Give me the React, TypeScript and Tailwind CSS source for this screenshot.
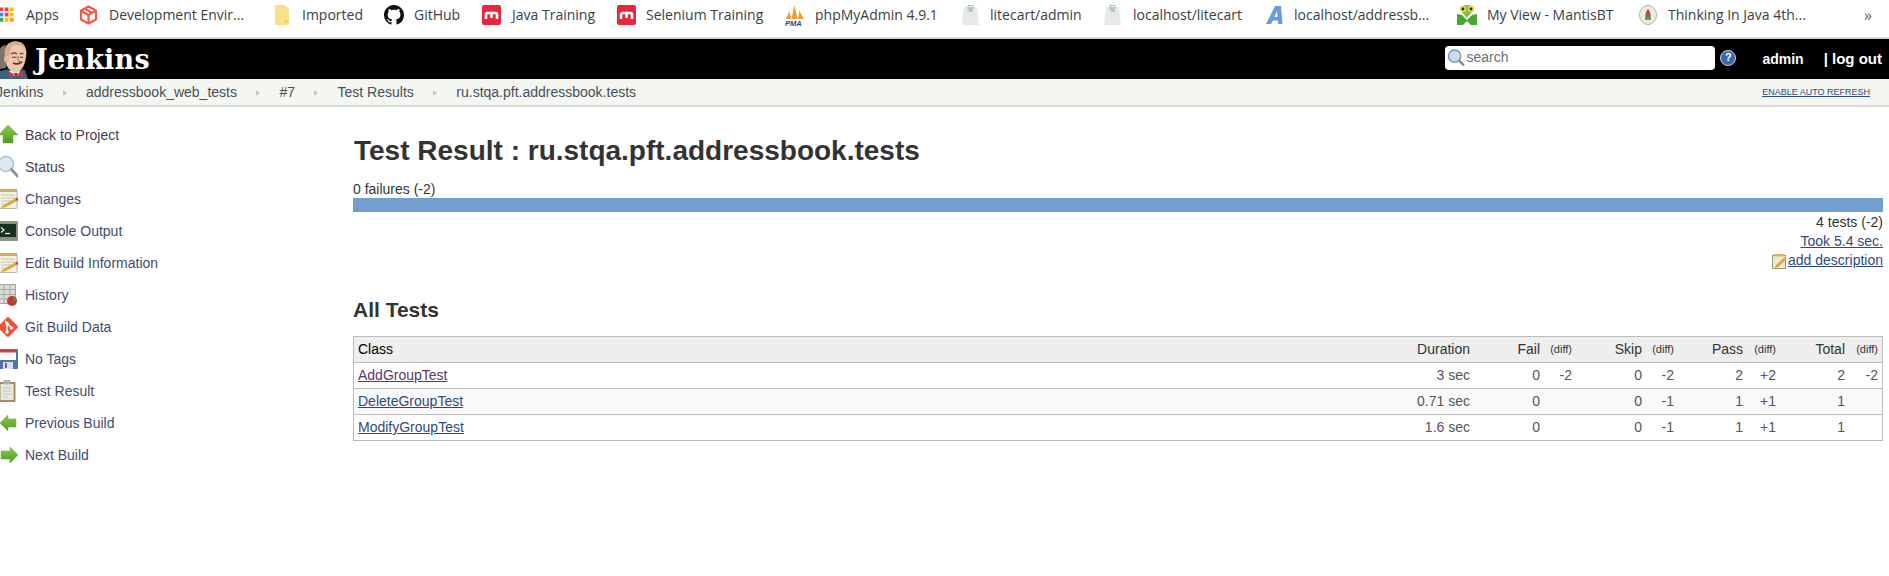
const sans = "font-['Liberation_Sans',Arial,sans-serif]";

function AppsIcon() {
  const colors = ['#ea4335', '#ea4335', '#fbbc04', '#4285f4', '#ea4335', '#fbbc04', '#34a853', '#fbbc04', '#fa9b17'];
  return (
    <svg width="14" height="15" viewBox="0 0 14 15">
      {colors.map((c, i) => (
        <rect key={i} x={(i % 3) * 5.2 - 0.5} y={Math.floor(i / 3) * 5.2 + 0.5} width="3.8" height="3.8" fill={c} />
      ))}
    </svg>
  );
}

function CubeIcon() {
  return (
    <svg width="19" height="20" viewBox="0 0 19 20" fill="none" stroke="#ef5a4a" strokeWidth="2.2" strokeLinejoin="round">
      <path d="M9.500 1.500 17 5.500V14.500L9.500 18.500 2 14.500V5.500Z" />
      <path d="M2 5.500 9.500 10 17 5.500M9.500 10v8.500M5.500 3.500 13 8" />
    </svg>
  );
}

function FolderIcon() {
  return (
    <svg width="16" height="20" viewBox="0 0 16 20">
      <path d="M1 0h10l4 4v16H1Z" fill="#fbe08b" />
      <path d="M11 20v-5h4Z" fill="#f0cd68" />
    </svg>
  );
}

function GithubIcon() {
  return (
    <svg width="20" height="20" viewBox="0 0 16 16" fill="#111">
      <path d="M8 0C3.580 0 0 3.580 0 8c0 3.540 2.290 6.530 5.470 7.590.4.070.55-.17.55-.38 0-.19-.01-.82-.01-1.490-2.010.37-2.530-.49-2.690-.94-.09-.23-.48-.94-.82-1.130-.28-.15-.68-.52-.01-.53.63-.01 1.080.58 1.230.82.720 1.210 1.870.87 2.330.66.070-.52.28-.87.51-1.070-1.780-.2-3.640-.89-3.640-3.950 0-.87.31-1.590.82-2.150-.08-.2-.36-1.020.08-2.120 0 0 .67-.21 2.200.82.64-.18 1.320-.27 2-.27s1.360.09 2 .27c1.530-1.040 2.200-.82 2.200-.82.44 1.100.16 1.920.08 2.120.51.56.82 1.270.82 2.150 0 3.070-1.870 3.750-3.650 3.950.29.25.54.73.54 1.480 0 1.070-.01 1.930-.01 2.200 0 .21.15.46.55.38A8.010 8.010 0 0 0 16 8c0-4.420-3.580-8-8-8Z" />
    </svg>
  );
}

function MoodleIcon() {
  return (
    <svg width="19" height="20" viewBox="0 0 19 20">
      <rect width="19" height="20" rx="2" fill="#e8273f" />
      <path d="M4 14V9.500a1.500 1.500 0 0 1 1.500-1.500h8a1.500 1.500 0 0 1 1.500 1.500V14M9.500 8v5" fill="none" stroke="#fff" strokeWidth="2.600" />
    </svg>
  );
}

function PmaIcon() {
  return (
    <svg width="20" height="22" viewBox="0 0 20 22">
      <path d="M1 15 4.500 7 6 15ZM6.500 15 9.500 1 12.500 15ZM13 15l1.500-8L19 15Z" fill="#f29a2e" />
      <text x="0" y="21.500" fontSize="7.500" fontWeight="700" fontStyle="italic" fill="#24489a" fontFamily="Liberation Sans">PMA</text>
    </svg>
  );
}

function BagIcon() {
  return (
    <svg width="17" height="21" viewBox="0 0 17 21">
      <path d="M2 3h13l2 18H0Z" fill="#e8e8e4" />
      <path d="M6 3h4l1 5H7Z" fill="#a9cbb7" />
      <path d="M6 5V1.500h5V5" fill="none" stroke="#9fbfae" />
    </svg>
  );
}

function AIcon() {
  return (
    <svg width="18" height="20" viewBox="0 0 18 20">
      <path d="M0 19 9 1h6l1.500 18H12l-.3-3.500H7L5 19ZM8.500 12h3L11 6Z" fill="#6c9ade" />
    </svg>
  );
}

function MantisIcon() {
  return (
    <svg width="20" height="21" viewBox="0 0 20 21">
      <path d="M0 21V10l5 1 5 5 5-5 5-1v11h-6l-4-4-4 4Z" fill="#46a82c" />
      <path d="M10 14 3 6a7 5 0 0 1 14 0Z" fill="#8dbb3a" />
      <circle cx="6" cy="5" r="3.200" fill="#e8d84a" />
      <circle cx="14" cy="5" r="3.200" fill="#e8d84a" />
      <circle cx="6" cy="5" r="1.400" fill="#222" />
      <circle cx="14" cy="5" r="1.400" fill="#222" />
    </svg>
  );
}

function SealIcon() {
  return (
    <svg width="18" height="20" viewBox="0 0 18 20">
      <ellipse cx="9" cy="10" rx="8.500" ry="9.500" fill="#e8ebe6" stroke="#a9b5a5" />
      <path d="M9 4c2.500 2.500 3 6 2.500 8h-5C6 10 6.500 6.500 9 4Z" fill="#a8583a" />
      <path d="M6 12h6v3H6Z" fill="#5c9a57" />
    </svg>
  );
}

const bookmarks = [
  { w: 'w-[79px]', gap: 'gap-[12px]', icon: <AppsIcon />, label: 'Apps' },
  { w: 'w-[195px]', gap: 'gap-[11px]', icon: <CubeIcon />, label: 'Development Envir...' },
  { w: 'w-[110px]', gap: 'gap-[12px]', icon: <FolderIcon />, label: 'Imported' },
  { w: 'w-[98px]', gap: 'gap-[10px]', icon: <GithubIcon />, label: 'GitHub' },
  { w: 'w-[135px]', gap: 'gap-[11px]', icon: <MoodleIcon />, label: 'Java Training' },
  { w: 'w-[168px]', gap: 'gap-[10px]', icon: <MoodleIcon />, label: 'Selenium Training' },
  { w: 'w-[177px]', gap: 'gap-[10px]', icon: <PmaIcon />, label: 'phpMyAdmin 4.9.1' },
  { w: 'w-[142px]', gap: 'gap-[11px]', icon: <BagIcon />, label: 'litecart/admin' },
  { w: 'w-[162px]', gap: 'gap-[12px]', icon: <BagIcon />, label: 'localhost/litecart' },
  { w: 'w-[191px]', gap: 'gap-[10px]', icon: <AIcon />, label: 'localhost/addressb...' },
  { w: 'w-[182px]', gap: 'gap-[10px]', icon: <MantisIcon />, label: 'My View - MantisBT' },
  { w: 'w-[225px]', gap: 'gap-[11px]', icon: <SealIcon />, label: 'Thinking In Java 4th...' },
];

function JenkinsHead() {
  return (
    <svg width="28" height="40" viewBox="0 0 28 40" className="shrink-0">
      {/* suit */}
      <path d="M0 32c5-2 18-3 25-1l3 9H0Z" fill="#3f5f7a" />
      <path d="M9 32h11l-2 5h-6Z" fill="#f1efe8" />
      {/* head */}
      <path d="M6 8C9 2 18 1 23 5c3 3 4 8 3 13-1 7-3 13-9 15-5 1-9-3-11-8-2-6-2-12 0-17Z" fill="#efc6a8" />
      <path d="M6 8C9 2 18 1 23 5c1 1 2 2 2 4-4-3-9-4-13-2-2 4-3 8-3 12l-1 3-3-1C2 15 3 11 6 8Z" fill="#d9ab8d" />
      {/* hair and ear */}
      <path d="M0 10c1-3 4-4 6-4-1 4-2 7-1 12 1 4 2 7 1 11l-6 1Z" fill="#77756e" />
      <ellipse cx="6.500" cy="20" rx="2.500" ry="3.500" fill="#e8b898" />
      {/* face */}
      <path d="M11 15c2-1.500 4-1.500 6 0M19.500 15c1.500-1 3-1 4 0M12 18.500c1.500-.7 3-.7 4.500 0M20 18.500c1-.5 2-.5 3 0" fill="none" stroke="#5a3b2d" strokeWidth="1.100" />
      <path d="M18.500 17c-1 3-1 5 1.500 5.500" fill="none" stroke="#a97a60" strokeWidth="1.100" />
      <path d="M13 24c3 1.500 7 1 9-1.500" fill="none" stroke="#4a4038" strokeWidth="1.800" />
      {/* bow tie */}
      <path d="M15 35.500 9.500 33v6ZM17 35.500l6-2.500v6Z" fill="#d33833" />
      <rect x="14.500" y="34" width="3" height="3" fill="#a92523" />
    </svg>
  );
}

function Bookmarks() {
  return (
    <div className="flex h-[39px] items-center border-b-[2px] border-[#d6d6d6] bg-white pb-[8px] font-['Open_Sans',sans-serif] text-[14px] text-[#3c4043]">
      {bookmarks.map((b) => (
        <div key={b.label} className={`flex shrink-0 items-center ${b.w} ${b.gap}`}>
          {b.icon}
          <span className="whitespace-nowrap">{b.label}</span>
        </div>
      ))}
      <span className="text-[16px] text-[#5f6368]">»</span>
    </div>
  );
}

function Header() {
  return (
    <div className={`flex h-[40px] items-center justify-between bg-black text-white ${sans}`}>
      <div className="flex items-center">
        <JenkinsHead />
        <span className="ml-[7px] font-['DejaVu_Serif',serif] text-[27px] font-bold leading-none tracking-[0.2px]">Jenkins</span>
      </div>
      <div className="flex items-center pr-[7px]">
        <div className="mb-[3px] flex items-center">
          <div className="flex h-[24px] w-[270px] items-center rounded-[4px] bg-white pl-[2px] text-[14px] text-[#6f6f6f]">
            <svg width="18" height="19" viewBox="0 0 19 19" fill="none" className="mr-[1px]">
              <circle cx="8" cy="8" r="6.500" fill="#c7dcef" stroke="#7f97ad" strokeWidth="1.500" />
              <path d="M12.500 12.500 18 18" stroke="#7d8894" strokeWidth="2.400" />
            </svg>
            search
          </div>
          <div className="ml-[5px] flex h-[16px] w-[16px] items-center justify-center rounded-full border border-[#c7d7ee] bg-[#3a69ac] text-[11px] font-bold leading-none">?</div>
        </div>
        <span className="ml-[26px] text-[14px] font-bold">admin</span>
        <span className="ml-[20px] text-[15px] font-bold">| log out</span>
      </div>
    </div>
  );
}

const crumbs = ['Jenkins', 'addressbook_web_tests', '#7', 'Test Results', 'ru.stqa.pft.addressbook.tests'];

function Breadcrumbs() {
  return (
    <div className={`flex h-[28px] items-center justify-between border-b-[2px] border-[#dcdfd8] bg-[#f4f6f1] pt-[1px] text-[14px] text-[#45505a] ${sans}`}>
      <div className="-ml-[4px] flex items-center">
        {crumbs.map((c, i) => (
          <div key={c} className="flex items-center">
            {i > 0 && <span className="mx-[19.250px] h-0 w-0 border-y-[3.500px] border-l-[4px] border-y-transparent border-l-[#c4c7c0]" />}
            <span>{c}</span>
          </div>
        ))}
      </div>
      <a className="mr-[19px] text-[9px] text-[#2e4a7d] underline">ENABLE AUTO REFRESH</a>
    </div>
  );
}

function BigArrow({ dir }: { dir: 'up' | 'left' | 'right' }) {
  const d =
    dir === 'up'
      ? 'M14 2 24 12H19V20H9V12H4.500Z'
      : dir === 'left'
        ? 'M6 12 14 4V8H22V16H14V20Z'
        : 'M24 12 16 4V8H7V16H16V20Z';
  const id = `arrow-${dir}`;
  return (
    <svg width="24" height="24" viewBox="0 0 24 24" className="-ml-[6px]">
      <defs>
        <linearGradient id={id} x1="0" y1="0" x2="0" y2="1">
          <stop offset="0" stopColor="#8fce4f" />
          <stop offset="1" stopColor="#4c9a1f" />
        </linearGradient>
      </defs>
      <path d={d} fill={`url(#${id})`} stroke="#6aa83a" strokeWidth="0.500" />
    </svg>
  );
}

function NotepadIcon() {
  return (
    <svg width="24" height="24" viewBox="0 0 24 24" className="-ml-[6px]">
      <rect x="5" y="2.500" width="18" height="19" rx="1" fill="#f5f2e4" stroke="#b9b5a3" />
      <rect x="5" y="2" width="18" height="3" fill="#cfae58" />
      <path d="M7 8h14M7 11h14M7 14h10M7 17h6" stroke="#c4c1b2" />
      <path d="M8 19 21 11.500l2 2.500-12 6.500-4 .5Z" fill="#dba83f" />
      <path d="M21 11.500l2.500-1 1 3-1.500.5Z" fill="#c8443e" />
    </svg>
  );
}

const sideIcons: Record<string, React.ReactNode> = {
  'Back to Project': <BigArrow dir="up" />,
  Status: (
    <svg width="24" height="24" viewBox="0 0 24 24" fill="none" className="-ml-[6px]">
      <circle cx="12" cy="9" r="7.500" fill="#dbe9f6" stroke="#aebfcf" strokeWidth="1.500" />
      <path d="M17.500 14.500 24 21.500" stroke="#858f98" strokeWidth="2.600" strokeLinecap="round" />
    </svg>
  ),
  Changes: <NotepadIcon />,
  'Console Output': (
    <svg width="24" height="24" viewBox="0 0 24 24" className="-ml-[6px]">
      <rect x="4" y="2" width="21" height="20" rx="3" fill="#8c8f86" />
      <rect x="6" y="5" width="16" height="13" fill="#17301f" />
      <path d="M7 8.500l3 2.500-3 2.500" fill="none" stroke="#f0f5ec" strokeWidth="1.200" />
      <path d="M11 14.500h5" stroke="#f0f5ec" strokeWidth="1.200" />
    </svg>
  ),
  'Edit Build Information': <NotepadIcon />,
  History: (
    <svg width="24" height="24" viewBox="0 0 24 24" className="-ml-[6px]">
      <rect x="4.500" y="1.500" width="17" height="19" fill="#dcdcd8" stroke="#a3a3a0" />
      <path d="M10 1.500v19M16 1.500v19M4.500 6.500h17M4.500 11.500h17M4.500 16h17" stroke="#a8a8a4" />
      <circle cx="18" cy="18" r="5" fill="#c9352b" />
      <path d="M18 18 21 14a5 5 0 0 1 2 4.500Z" fill="#4f8f3a" />
    </svg>
  ),
  'Git Build Data': (
    <svg width="24" height="24" viewBox="0 0 24 24" className="-ml-[6px]">
      <rect x="6.500" y="4.500" width="15" height="15" rx="2" transform="rotate(45 14 12)" fill="#f05133" />
      <path d="M11 6 17 12.500M13 8.500v8" stroke="#fff" strokeWidth="1.500" />
      <circle cx="13" cy="8.500" r="1.700" fill="#fff" />
      <circle cx="13" cy="17" r="1.700" fill="#fff" />
      <circle cx="17.500" cy="13" r="1.700" fill="#fff" />
    </svg>
  ),
  'No Tags': (
    <svg width="24" height="24" viewBox="0 0 24 24" className="-ml-[6px]">
      <rect x="4" y="2" width="20" height="20" rx="1" fill="#5272a8" />
      <rect x="5" y="3" width="17" height="10" fill="#fdfdfd" />
      <rect x="5" y="3" width="17" height="2.500" fill="#c9453e" />
      <rect x="9" y="15" width="10" height="7" fill="#d8dde6" />
      <rect x="11" y="16" width="2" height="5" fill="#5272a8" />
    </svg>
  ),
  'Test Result': (
    <svg width="24" height="24" viewBox="0 0 24 24" className="-ml-[6px]">
      <rect x="4.500" y="3" width="17" height="20" rx="1" fill="#a98a5f" />
      <rect x="6.500" y="5" width="13" height="16" fill="#e9e9e6" />
      <path d="M8.500 9h9M8.500 12h9M8.500 15h9M8.500 18h6" stroke="#c3c3bf" />
      <rect x="9.500" y="1" width="7" height="4.500" rx="1" fill="#b3b3ae" />
    </svg>
  ),
  'Previous Build': <BigArrow dir="left" />,
  'Next Build': <BigArrow dir="right" />,
};

const sideItems = ['Back to Project', 'Status', 'Changes', 'Console Output', 'Edit Build Information', 'History', 'Git Build Data', 'No Tags', 'Test Result', 'Previous Build', 'Next Build'];

function Sidebar() {
  return (
    <div className="flex w-[353px] shrink-0 flex-col pt-[12px] text-[14px] text-[#3f4d6e]">
      {sideItems.map((s, i) => (
        <div key={s} className={`flex h-[32px] items-center ${i < 2 ? 'text-[#4a3c55]' : ''}`}>
          <div className="flex w-[25px] shrink-0 justify-start">{sideIcons[s]}</div>
          <span>{s}</span>
        </div>
      ))}
    </div>
  );
}

const rows = [
  { name: 'AddGroupTest', visited: true, dur: '3 sec', fail: '0', fd: '-2', skip: '0', sd: '-2', pass: '2', pd: '+2', total: '2', td: '-2', bg: 'bg-white' },
  { name: 'DeleteGroupTest', visited: false, dur: '0.71 sec', fail: '0', fd: '', skip: '0', sd: '-1', pass: '1', pd: '+1', total: '1', td: '', bg: 'bg-[#f9f9f9]' },
  { name: 'ModifyGroupTest', visited: false, dur: '1.6 sec', fail: '0', fd: '', skip: '0', sd: '-1', pass: '1', pd: '+1', total: '1', td: '', bg: 'bg-white' },
];

const gridCols = 'grid grid-cols-[1fr_101px_70px_32px_70px_32px_69px_33px_69px_33px_4px] items-center';

function ResultsTable() {
  return (
    <div className="border border-[#bbb] text-[14px]">
      <div className={`${gridCols} h-[25px] bg-[#eee] text-[#333]`}>
        <span className="pl-[4px] text-black">Class</span>
        <span className="text-right">Duration</span>
        <span className="text-right">Fail</span>
        <span className="text-right text-[11px]">(diff)</span>
        <span className="text-right">Skip</span>
        <span className="text-right text-[11px]">(diff)</span>
        <span className="text-right">Pass</span>
        <span className="text-right text-[11px]">(diff)</span>
        <span className="text-right">Total</span>
        <span className="text-right text-[11px]">(diff)</span>
      </div>
      {rows.map((r) => (
        <div key={r.name} className={`${gridCols} h-[26px] border-t border-[#bbb] text-[#555] first-of-type:border-t-0 ${r.bg}`}>
          <a className={`pl-[4px] underline ${r.visited ? 'text-[#5c3566]' : 'text-[#2e4a7d]'}`}>{r.name}</a>
          <span className="text-right">{r.dur}</span>
          <span className="text-right">{r.fail}</span>
          <span className="text-right">{r.fd}</span>
          <span className="text-right">{r.skip}</span>
          <span className="text-right">{r.sd}</span>
          <span className="text-right">{r.pass}</span>
          <span className="text-right">{r.pd}</span>
          <span className="text-right">{r.total}</span>
          <span className="text-right">{r.td}</span>
        </div>
      ))}
    </div>
  );
}

function Main() {
  return (
    <div className="min-w-0 flex-1 pr-[6px] text-[14px] text-[#333]">
      <h1 className="mt-[28px] pl-[1px] text-[28px] font-bold leading-[32px]">Test Result : ru.stqa.pft.addressbook.tests</h1>
      <div className="mt-[14px] leading-[16px]">0 failures (-2)</div>
      <div className="mt-[1px] h-[14px] bg-[#729fcf]" />
      <div className="mt-[1px] flex flex-col items-end leading-[19px]">
        <span>4 tests (-2)</span>
        <a className="text-[#2e4a7d] underline">Took 5.4 sec.</a>
        <div className="flex items-center">
          <svg width="16" height="16" viewBox="0 0 16 16">
            <rect x="0.500" y="2.500" width="13" height="13" fill="#efe9cf" stroke="#9b9a85" />
            <path d="M2 1h10v2.500H2Z" fill="#d9b64e" />
            <path d="M4 12 13 4l2 2-9 8-3 1Z" fill="#d9a441" />
          </svg>
          <a className="text-[#2e4a7d] underline">add description</a>
        </div>
      </div>
      <h2 className="mt-[27px] text-[21px] font-bold leading-[26px]">All Tests</h2>
      <div className="mt-[13px]">
        <ResultsTable />
      </div>
    </div>
  );
}

export default function App() {
  return (
    <div className={`h-[576px] w-[1889px] overflow-hidden bg-white ${sans}`}>
      <Bookmarks />
      <Header />
      <Breadcrumbs />
      <div className="flex">
        <Sidebar />
        <Main />
      </div>
    </div>
  );
}
